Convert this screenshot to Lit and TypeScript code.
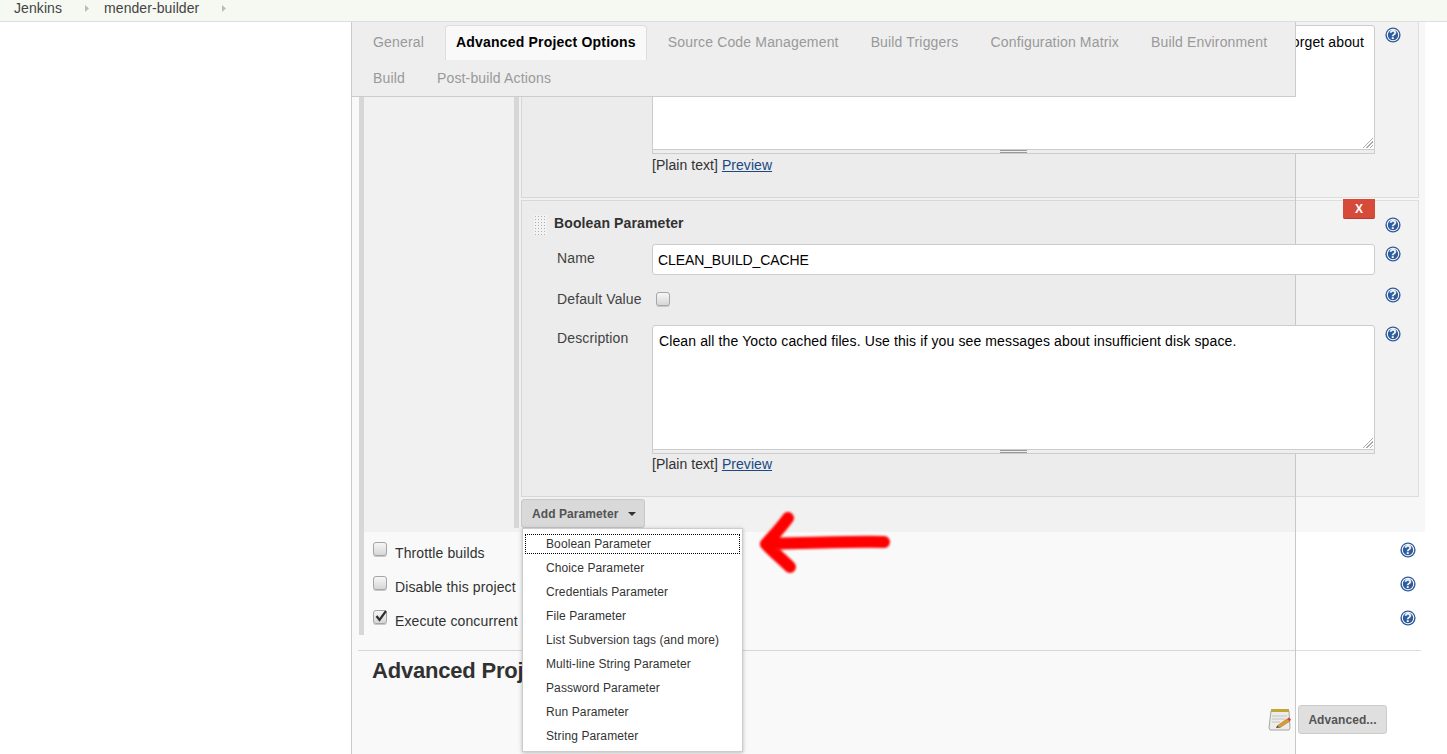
import { LitElement, html, css, svg } from 'lit'
import { customElement } from 'lit/decorators.js'

const helpIcon = html`
    <svg class="help" width="16" height="16" viewBox="0 0 16 16">
        <circle cx="8" cy="8" r="7.6" fill="#2f5c9c" />
        <circle cx="8" cy="8" r="6.2" fill="#fff" />
        <circle cx="8" cy="8" r="5.2" fill="#2f5c9c" />
        <text x="8" y="12.2" text-anchor="middle" class="help-mark">?</text>
    </svg>
`

const crumbArrow = html`
    <svg class="crumb-arrow" width="4" height="7" viewBox="0 0 4 7">
        <path d="M0 0 L4 3.5 L0 7 Z" fill="#bbb" />
    </svg>
`

const notepad = svg`
    <path d="M3 3 H21 L22 20 L21 22 H2 L1 20 Z" fill="#f2f2ee" stroke="#aaa" stroke-width="1" />
    <rect x="3" y="1" width="18" height="3" fill="#c9a93c" />
    <path d="M4 8 H19 M4 11 H17 M4 14 H12" stroke="#c8c8c8" stroke-width="1" />
    <path d="M9 18 L19 11 L22 13 L12 19.5 Z" fill="#e3a23a" stroke="#a9761f" stroke-width=".6" />
    <path d="M19 11 L21 9.5 L23 11.5 L22 13 Z" fill="#d9423a" />
    <path d="M9 18 L8 20 L12 19.5 Z" fill="#444" />
`

const menuItems = [
    'Boolean Parameter',
    'Choice Parameter',
    'Credentials Parameter',
    'File Parameter',
    'List Subversion tags (and more)',
    'Multi-line String Parameter',
    'Password Parameter',
    'Run Parameter',
    'String Parameter',
]

@customElement('app-root')
export class AppRoot extends LitElement {
    static get styles() {
        return css`
            :host {
                display: block;
                width: 1447px;
                height: 754px;
                overflow: hidden;
                position: relative;
                background: #fff;
                font-family: 'Liberation Sans', Arial, sans-serif;
                font-size: 14px;
                letter-spacing: 0.12px;
                color: #333;
            }

            .crumbs {
                height: 15px;
                padding: 0 0 6px 14px;
                border-bottom: 1px solid #ddd;
                background: #f6f8f2;
                display: flex;
                align-items: center;
                color: #444;
                line-height: 16px;
                box-sizing: content-box;
                letter-spacing: 0.08px;
            }

            .crumb-arrow {
                margin: 1px 15px 0 23px;
            }

            .main {
                display: flex;
                height: 732px;
            }

            .sidebar {
                width: 351px;
                flex: none;
            }

            .content {
                width: 1074px;
                flex: none;
                border-left: 1px solid #ccc;
                padding-left: 6px;
                box-sizing: border-box;
            }

            .options {
                margin-left: 1px;
                border-left: 5px solid #ddd;
                height: 613px;
            }

            .block {
                display: flex;
                background: #f7f7f7;
                height: 510px;
                padding-right: 6px;
            }

            .block-left {
                width: 150px;
                flex: none;
            }

            .block-right {
                flex: 1;
                border-left: 5px solid #ddd;
                margin-bottom: 4px;
                padding-left: 2px;
            }

            .chunk {
                position: relative;
                border: 1px solid #ddd;
                background: #f2f2f2;
                box-sizing: border-box;
                margin-bottom: 2px;
            }

            .chunk.first {
                height: 176px;
                border-top: none;
                padding-top: 3px;
            }

            .chunk.second {
                height: 297px;
            }

            .row {
                display: flex;
                align-items: flex-start;
            }

            .row-label {
                width: 95px;
                margin-left: 35px;
                flex: none;
                color: #444;
            }

            .row-field {
                width: 723px;
                flex: none;
            }

            .help {
                margin-left: 10px;
                flex: none;
            }

            .help-mark {
                font: bold 12px 'Liberation Sans', Arial, sans-serif;
                fill: #fff;
            }

            .first .help {
                margin-top: 2px;
            }

            .title-row {
                height: 43px;
                padding-left: 12px;
                display: flex;
                align-items: flex-start;
            }

            .handle {
                width: 13px;
                height: 20px;
                margin-top: 14px;
                flex: none;
                background-color: #f8f8f8;
                background-image: radial-gradient(#b5b5b5 0.8px, transparent 0.9px);
                background-size: 3px 3px;
            }

            .chunk-title {
                width: 803px;
                flex: none;
                margin: 14px 0 0 7px;
                font-weight: bold;
                line-height: 17px;
                color: #333;
            }

            .title-row .help {
                margin: 16px 0 0 28px;
            }

            .delete {
                position: absolute;
                left: 821px;
                top: -2px;
                width: 32px;
                height: 20px;
                border: none;
                border-radius: 0 0 2px 2px;
                background: #d64a3a;
                border-bottom: 1px solid #b83a2c;
                color: #fff;
                font: bold 12px 'Liberation Sans', Arial, sans-serif;
                padding: 0;
                z-index: 2;
            }

            .above {
                position: relative;
                z-index: 2;
            }

            input.text {
                display: block;
                width: 100%;
                height: 31px;
                box-sizing: border-box;
                border: 1px solid #ccc;
                border-radius: 3px;
                padding: 0 5px;
                background: #fff;
                color: #000;
                font: 14px 'Liberation Sans', Arial, sans-serif;
                letter-spacing: -0.1px;
            }

            .name-row .help {
                margin-top: 2px;
            }

            .desc-row .help {
                margin-top: 1px;
            }

            .area {
                position: relative;
                z-index: 2;
            }

            .area::after {
                content: '';
                position: absolute;
                right: 2px;
                bottom: 2px;
                width: 12px;
                height: 12px;
                background: repeating-linear-gradient(135deg, #aaa 0, #aaa 1px, transparent 1px, transparent 2.4px);
                clip-path: polygon(100% 0, 100% 100%, 0 100%);
            }

            textarea {
                display: block;
                width: 100%;
                height: 125px;
                box-sizing: border-box;
                border: 1px solid #ccc;
                border-radius: 3px 3px 0 0;
                padding: 7px 6px;
                background: #fff;
                color: #000;
                font: 14px/17px 'Liberation Sans', Arial, sans-serif;
                letter-spacing: 0.12px;
                resize: none;
                margin: 0;
                overflow: hidden;
            }

            textarea.end {
                text-align: right;
                padding: 8px 10px 0 0;
            }

            .grip {
                height: 4px;
                box-sizing: border-box;
                background: #eee;
                border: 1px solid #ccc;
                border-top: none;
                display: flex;
                justify-content: center;
            }

            .grip span {
                width: 27px;
                height: 3px;
                box-sizing: border-box;
                border-bottom: 1px solid #999;
                border-top: 1px solid #999;
            }

            .format {
                margin-top: 3px;
                line-height: 16px;
                letter-spacing: 0.05px;
                color: #333;
            }

            .desc-row .format {
                margin-top: 2px;
            }

            .format a {
                color: #204a87;
                text-decoration: underline;
            }

            .checkbox {
                display: inline-block;
                width: 14px;
                height: 14px;
                box-sizing: border-box;
                border: 1px solid #aaa;
                border-radius: 3px;
                background: linear-gradient(#fdfdfd, #dcdcdc);
                box-shadow: 0 1px 0 #ccc;
                position: relative;
            }

            .checkbox svg {
                position: absolute;
                left: 0;
                top: -2px;
            }

            .default-row {
                margin-top: 12px;
                height: 38px;
            }

            .default-row .row-label {
                margin-top: 4px;
            }

            .default-row .checkbox {
                margin: 5px 0 0 4px;
            }

            .name-label {
                margin-top: 6px;
            }

            .desc-label {
                margin-top: 5px;
            }

            .btn {
                background: #dfdfdf;
                border: 1px solid #ccc;
                border-radius: 3px;
                color: #555;
                font: bold 12px 'Liberation Sans', Arial, sans-serif;
                letter-spacing: 0.08px;
                padding: 0;
                box-sizing: border-box;
            }

            .add-btn {
                width: 124px;
                height: 29px;
                display: flex;
                align-items: center;
                padding-left: 10px;
                margin-top: 1px;
            }

            .caret {
                width: 0;
                height: 0;
                margin-left: 10px;
                border: 4px solid transparent;
                border-top-color: #333;
                border-bottom: none;
            }

            .checks {
                padding: 0 9px 0 9px;
            }

            .check-row {
                display: flex;
                height: 34px;
                align-items: flex-start;
            }

            .check-row .checkbox {
                margin-top: 10px;
                flex: none;
            }

            .check-row label {
                flex: 1;
                margin: 13px 0 0 8px;
                line-height: 16px;
                white-space: nowrap;
            }

            .check-row .help {
                margin-top: 10px;
            }

            .foot {
                border-top: 1px solid #ddd;
                margin: 15px 4px 0 0;
                height: 80px;
                position: relative;
                padding: 7px 0 0 14px;
            }

            .foot h2 {
                margin: 0;
                font-size: 22px;
                letter-spacing: -0.2px;
                line-height: 26px;
                font-weight: bold;
                color: #333;
            }

            .foot-actions {
                display: flex;
                justify-content: flex-end;
                align-items: center;
                gap: 6px;
                margin: 21px 34px 0 0;
            }

            .advanced {
                width: 89px;
                height: 29px;
            }

            .tint {
                position: absolute;
                left: 352px;
                top: 22px;
                width: 943px;
                bottom: 0;
                background: rgba(0, 0, 0, 0.024);
                border-right: 1px solid #c8c8c8;
                z-index: 1;
            }

            .tabs {
                position: absolute;
                left: 352px;
                top: 22px;
                width: 944px;
                height: 75px;
                box-sizing: border-box;
                background: #eee;
                border-right: 1px solid #ccc;
                border-bottom: 1px solid #ccc;
                padding: 3px 0 0 10px;
                display: flex;
                flex-wrap: wrap;
                align-content: flex-start;
                column-gap: 10px;
                row-gap: 1px;
                z-index: 3;
            }

            .tab {
                height: 35px;
                box-sizing: border-box;
                padding: 0 11px;
                line-height: 34px;
                color: #999;
                white-space: nowrap;
                letter-spacing: 0.16px;
            }

            .tab.active {
                background: #f9f9f9;
                color: #000;
                font-weight: bold;
                letter-spacing: 0.2px;
                border: 1px solid #ddd;
                border-bottom: none;
                border-radius: 4px 4px 0 0;
                padding: 0 10px;
                line-height: 32px;
            }

            .menu {
                position: absolute;
                left: 522px;
                top: 528px;
                width: 221px;
                height: 224px;
                box-sizing: border-box;
                background: #fff;
                border: 1px solid #ccc;
                box-shadow: 0 1px 4px rgba(0, 0, 0, 0.25);
                padding-top: 3px;
                font-size: 12px;
                letter-spacing: 0.1px;
                color: #333;
                z-index: 4;
            }

            .menu-item {
                height: 24px;
                line-height: 24px;
                padding-left: 23px;
                white-space: nowrap;
                position: relative;
            }

            .menu-item.focus::after {
                content: '';
                position: absolute;
                left: 2px;
                right: 2px;
                top: 2px;
                bottom: 2px;
                border: 1px dotted #000;
            }

            .arrow {
                position: absolute;
                left: 750px;
                top: 505px;
                z-index: 5;
            }

            .arrow path {
                filter: blur(1.1px);
            }
        `
    }

    private _grip() {
        return html`<div class="grip above"><span></span></div>`
    }

    private _format() {
        return html`<div class="format">[Plain text] <a href="#">Preview</a></div>`
    }

    private _checkRow(label: string, checked: boolean) {
        return html`
            <div class="check-row">
                <span class="checkbox">
                    ${checked
                        ? html`<svg width="14" height="14" viewBox="0 0 14 14">
                              <path d="M2.5 7 L5.5 11 L12 2" fill="none" stroke="#333" stroke-width="2.2" />
                          </svg>`
                        : ''}
                </span>
                <label>${label}</label>
                ${helpIcon}
            </div>
        `
    }

    render() {
        return html`
            <div class="crumbs">
                <span>Jenkins</span>${crumbArrow}<span>mender-builder</span>${crumbArrow}
            </div>
            <div class="main">
                <div class="sidebar"></div>
                <div class="content">
                    <div class="options">
                        <div class="block">
                            <div class="block-left"></div>
                            <div class="block-right">
                                <div class="chunk first">
                                    <div class="row">
                                        <div class="row-label"></div>
                                        <div class="row-field">
                                            <div class="area">
                                                <textarea class="end" readonly>Don't forget about</textarea>
                                            </div>
                                            ${this._grip()} ${this._format()}
                                        </div>
                                        ${helpIcon}
                                    </div>
                                </div>
                                <div class="chunk second">
                                    <button class="delete">X</button>
                                    <div class="title-row">
                                        <div class="handle"></div>
                                        <div class="chunk-title">Boolean Parameter</div>
                                        ${helpIcon}
                                    </div>
                                    <div class="row name-row">
                                        <div class="row-label name-label">Name</div>
                                        <div class="row-field">
                                            <input class="text above" value="CLEAN_BUILD_CACHE" />
                                        </div>
                                        ${helpIcon}
                                    </div>
                                    <div class="row default-row">
                                        <div class="row-label">Default Value</div>
                                        <div class="row-field"><span class="checkbox"></span></div>
                                        ${helpIcon}
                                    </div>
                                    <div class="row desc-row">
                                        <div class="row-label desc-label">Description</div>
                                        <div class="row-field">
                                            <div class="area">
                                                <textarea readonly>Clean all the Yocto cached files. Use this if you see messages about insufficient disk space.</textarea>
                                            </div>
                                            ${this._grip()} ${this._format()}
                                        </div>
                                        ${helpIcon}
                                    </div>
                                </div>
                                <button class="btn add-btn">Add Parameter<span class="caret"></span></button>
                            </div>
                        </div>
                        <div class="checks">
                            ${this._checkRow('Throttle builds', false)}
                            ${this._checkRow('Disable this project', false)}
                            ${this._checkRow('Execute concurrent', true)}
                        </div>
                    </div>
                    <div class="foot">
                        <h2>Advanced Proj</h2>
                        <div class="foot-actions">
                            <svg width="24" height="24" viewBox="0 0 24 24">${notepad}</svg>
                            <button class="btn advanced">Advanced...</button>
                        </div>
                    </div>
                </div>
            </div>

            <div class="tint"></div>
            <div class="tabs">
                <div class="tab">General</div>
                <div class="tab active">Advanced Project Options</div>
                <div class="tab">Source Code Management</div>
                <div class="tab">Build Triggers</div>
                <div class="tab">Configuration Matrix</div>
                <div class="tab">Build Environment</div>
                <div class="tab">Build</div>
                <div class="tab">Post-build Actions</div>
            </div>

            <div class="menu">
                ${menuItems.map(
                    (item, i) => html`<div class="menu-item ${i === 0 ? 'focus' : ''}">${item}</div>`
                )}
            </div>

            <svg class="arrow" width="150" height="75" viewBox="0 0 150 75">
                <path
                    d="M134 37 C110 36 60 38 16 39 M38 13 C30 24 24 30 16 39 C22 46 32 54 40 62"
                    fill="none"
                    stroke="#f00"
                    stroke-width="12"
                    stroke-linecap="round"
                    stroke-linejoin="round"
                />
            </svg>
        `
    }
}
